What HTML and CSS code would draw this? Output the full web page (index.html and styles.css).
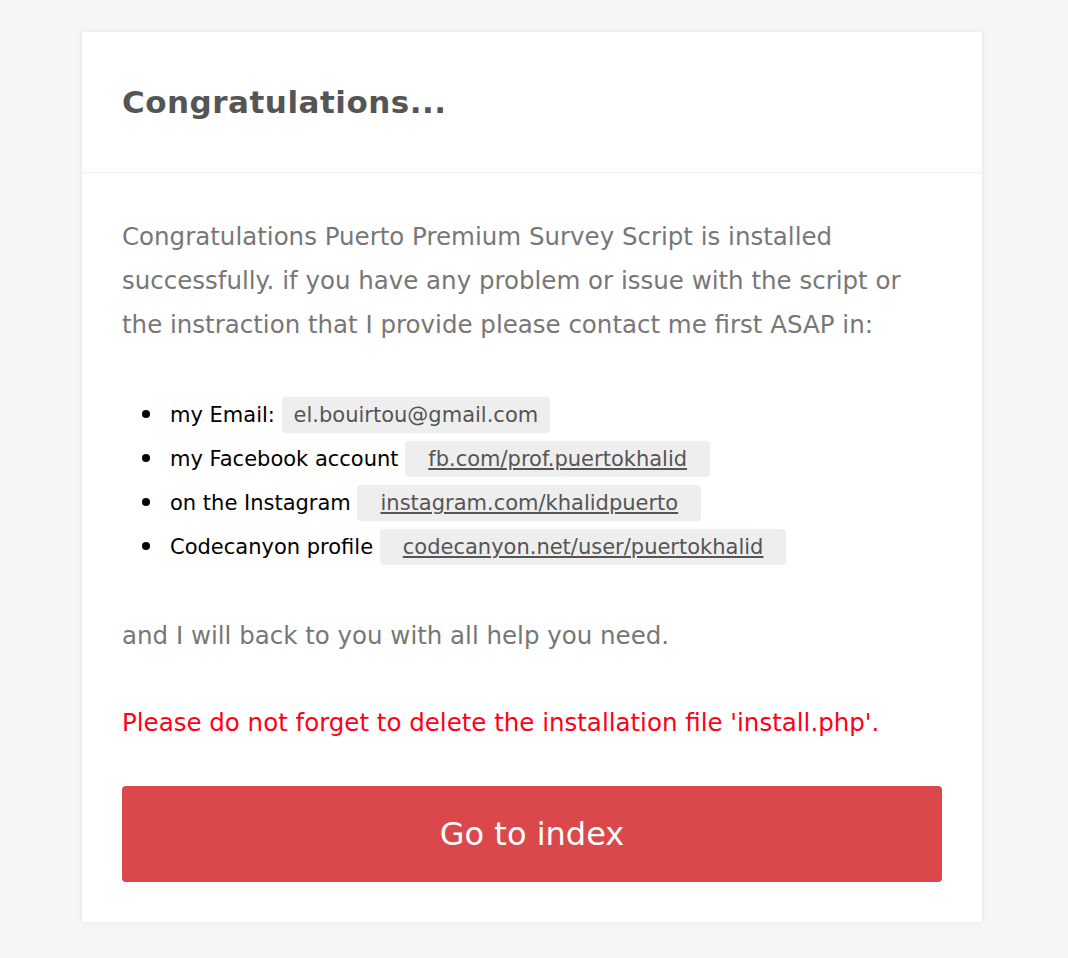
FILE: index.html
```html
<!DOCTYPE html>
<html>
<head>
<meta charset="utf-8">
<link rel="stylesheet" href="styles.css">
</head>
<body>
<div class="card">
  <div class="card-header">
    <h1 class="title">Congratulations...</h1>
  </div>
  <div class="card-body">
    <p class="text">Congratulations Puerto Premium Survey Script is installed successfully. if you have any problem or issue with the script or the instraction that I provide please contact me first ASAP in:</p>
    <ul class="contacts">
      <li>my Email: <code class="pill pill-plain">el.bouirtou@gmail.com</code></li>
      <li>my Facebook account <code class="pill"><a href="#">fb.com/prof.puertokhalid</a></code></li>
      <li>on the Instagram <code class="pill"><a href="#">instagram.com/khalidpuerto</a></code></li>
      <li>Codecanyon profile <code class="pill"><a href="#">codecanyon.net/user/puertokhalid</a></code></li>
    </ul>
    <p class="text">and I will back to you with all help you need.</p>
    <p class="warning">Please do not forget to delete the installation file 'install.php'.</p>
    <a class="btn" href="#">Go to index</a>
  </div>
</div>
</body>
</html>
```
FILE: styles.css
```css
html, body {
  margin: 0;
  padding: 0;
}
body {
  background: #f6f6f6;
  font-family: "DejaVu Sans", "Liberation Sans", sans-serif;
  padding: 32px 0 36px;
}
.card {
  width: 900px;
  margin-left: 82px;
  background: #fff;
  box-shadow: 0 0 6px rgba(0,0,0,0.08);
}
.card-header {
  padding: 40px 40px;
  border-bottom: 1px solid #f2f2f2;
  height: 60px;
  display: flex;
  align-items: center;
}
.title {
  margin: 0;
  font-size: 31px;
  letter-spacing: 0.5px;
  font-weight: bold;
  color: #555;
}
.card-body {
  padding: 42px 40px 40px;
}
.text {
  margin: 0;
  font-size: 24.5px;
  line-height: 44px;
  color: #777;
}
.contacts {
  margin: 46px 0 45px;
  padding-left: 48px;
  list-style: none;
  font-size: 21px;
  line-height: 44px;
  color: #000;
}
.contacts li::before {
  content: "";
  display: inline-block;
  width: 8px;
  height: 8px;
  border-radius: 50%;
  background: #000;
  margin-left: -28px;
  margin-right: 20px;
  vertical-align: middle;
  position: relative;
  top: -2px;
}
.pill {
  font-family: inherit;
  font-size: 21px;
  background: #eee;
  border-radius: 4px;
  padding: 6px 23px;
  color: #555;
}
.pill-plain {
  padding: 6px 12px;
}
.pill a {
  color: #555;
  text-decoration: underline;
}
.warning {
  margin: 43px 0 41px;
  font-size: 24.5px;
  line-height: 44px;
  color: #ff0018;
}
.btn {
  display: flex;
  align-items: center;
  justify-content: center;
  height: 96px;
  background: #db484b;
  border-radius: 4px;
  color: #fff;
  font-size: 32px;
  text-decoration: none;
}
```
